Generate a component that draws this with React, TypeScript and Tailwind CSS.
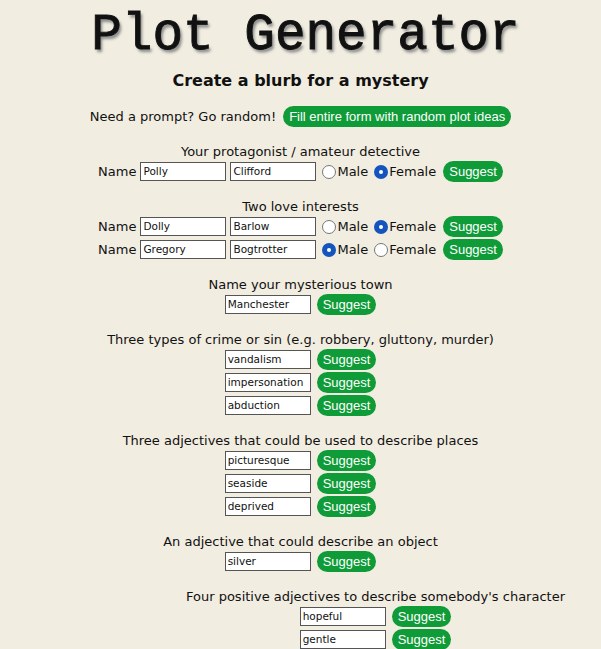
import React from 'react';

type Person = { first: string; last: string; gender: 'male' | 'female' };

const body = { fontFamily: '"DejaVu Sans", Verdana, sans-serif' };
const btnFont = { fontFamily: '"Liberation Sans", Arial, sans-serif' };

function SuggestButton({ label = 'Suggest' }: { label?: string }) {
  return (
    <button
      type="button"
      className="h-[21px] rounded-full bg-[#0f9b38] px-[6px] text-[13px] leading-none text-white"
      style={btnFont}
    >
      {label}
    </button>
  );
}

function TextBox({ value }: { value: string }) {
  return (
    <div className="flex h-[19px] w-[86px] items-center border border-[#555] bg-white px-[2px] text-[10.5px] text-[#111]">
      {value}
    </div>
  );
}

function Radio({ checked, label }: { checked: boolean; label: string }) {
  return (
    <span className="flex items-center">
      {checked ? (
        <span className="flex h-[14px] w-[14px] items-center justify-center rounded-full bg-[#1455bd]">
          <span className="h-[4px] w-[4px] rounded-full bg-white" />
        </span>
      ) : (
        <span className="h-[14px] w-[14px] rounded-full border border-[#777] bg-white" />
      )}
      <span className="ml-px">{label}</span>
    </span>
  );
}

function PersonRow({ person }: { person: Person }) {
  return (
    <div className="flex h-[21px] items-center">
      <span className="mr-[4px]">Name</span>
      <TextBox value={person.first} />
      <span className="w-[4px]" />
      <TextBox value={person.last} />
      <span className="w-[6px]" />
      <Radio checked={person.gender === 'male'} label="Male" />
      <span className="w-[6px]" />
      <Radio checked={person.gender === 'female'} label="Female" />
      <span className="w-[7px]" />
      <SuggestButton />
    </div>
  );
}

function WordRow({ value }: { value: string }) {
  return (
    <div className="flex h-[21px] items-center gap-[6px]">
      <TextBox value={value} />
      <SuggestButton />
    </div>
  );
}

function Section({ title, children, shifted }: { title: string; children: React.ReactNode; shifted?: boolean }) {
  return (
    <div className={`flex w-full flex-col items-center mt-[16px] ${shifted ? 'pl-[150px]' : ''}`}>
      <div className="h-[17px] leading-[17px] mb-px">{title}</div>
      <div className="flex flex-col items-center gap-[2px]">{children}</div>
    </div>
  );
}

export default function App() {
  const protagonist: Person = { first: 'Polly', last: 'Clifford', gender: 'female' };
  const loves: Person[] = [
    { first: 'Dolly', last: 'Barlow', gender: 'female' },
    { first: 'Gregory', last: 'Bogtrotter', gender: 'male' },
  ];

  return (
    <div className="h-[649px] w-[601px] overflow-hidden bg-[#f1ede1] text-[13px] text-[#111]" style={body}>
      <div className="flex flex-col items-center">
        <h1
          className="mt-[4px] ml-[10px] h-[62px] text-[51px] leading-[64px] text-[#111] [-webkit-text-stroke:0.9px_#111] [text-shadow:2px_3px_3px_#888]"
          style={{ fontFamily: '"Liberation Mono", "Courier New", monospace' }}
        >
          Plot Generator
        </h1>
        <h2 className="mt-[5px] text-[16px] font-bold leading-[20px]">Create a blurb for a mystery</h2>

        <div className="mt-[15px] flex h-[21px] items-center gap-[7px]">
          <span>Need a prompt? Go random!</span>
          <SuggestButton label="Fill entire form with random plot ideas" />
        </div>

        <Section title="Your protagonist / amateur detective">
          <PersonRow person={protagonist} />
        </Section>

        <Section title="Two love interests">
          {loves.map((p) => (
            <PersonRow key={p.first} person={p} />
          ))}
        </Section>

        <Section title="Name your mysterious town">
          <WordRow value="Manchester" />
        </Section>

        <Section title="Three types of crime or sin (e.g. robbery, gluttony, murder)">
          {['vandalism', 'impersonation', 'abduction'].map((w) => (
            <WordRow key={w} value={w} />
          ))}
        </Section>

        <Section title="Three adjectives that could be used to describe places">
          {['picturesque', 'seaside', 'deprived'].map((w) => (
            <WordRow key={w} value={w} />
          ))}
        </Section>

        <Section title="An adjective that could describe an object">
          <WordRow value="silver" />
        </Section>

        <Section title="Four positive adjectives to describe somebody's character" shifted>
          {['hopeful', 'gentle', 'kind', 'brave'].map((w) => (
            <WordRow key={w} value={w} />
          ))}
        </Section>
      </div>
    </div>
  );
}
